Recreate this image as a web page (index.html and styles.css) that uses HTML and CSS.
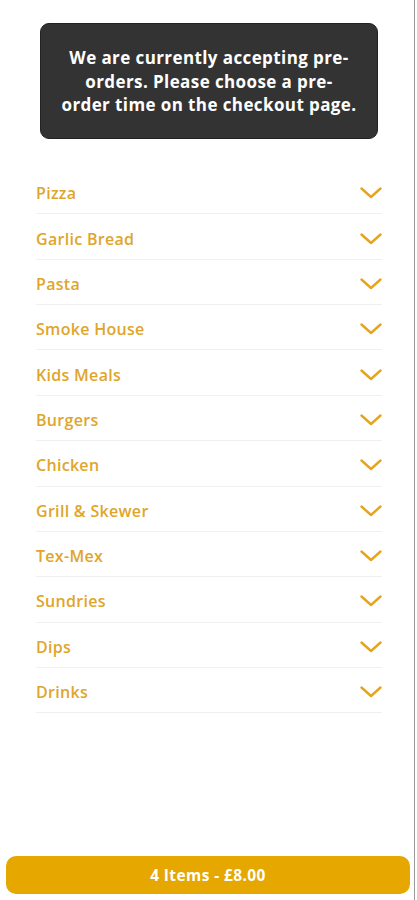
FILE: index.html
```html
<!DOCTYPE html>
<html lang="en">
<head>
<meta charset="utf-8">
<title>Menu</title>
<link rel="stylesheet" href="styles.css">
</head>
<body>
<div class="page">
  <div class="notice">We are currently accepting pre-<br>orders. Please choose a pre-<br>order time on the checkout page.</div>
  <ul class="menu">
    <li class="row"><span>Pizza</span><svg class="chev" viewBox="0 0 22 12"><path d="M1.5 1.5 L11 10 L20.5 1.5"/></svg></li>
    <li class="row"><span>Garlic Bread</span><svg class="chev" viewBox="0 0 22 12"><path d="M1.5 1.5 L11 10 L20.5 1.5"/></svg></li>
    <li class="row"><span>Pasta</span><svg class="chev" viewBox="0 0 22 12"><path d="M1.5 1.5 L11 10 L20.5 1.5"/></svg></li>
    <li class="row"><span>Smoke House</span><svg class="chev" viewBox="0 0 22 12"><path d="M1.5 1.5 L11 10 L20.5 1.5"/></svg></li>
    <li class="row"><span>Kids Meals</span><svg class="chev" viewBox="0 0 22 12"><path d="M1.5 1.5 L11 10 L20.5 1.5"/></svg></li>
    <li class="row"><span>Burgers</span><svg class="chev" viewBox="0 0 22 12"><path d="M1.5 1.5 L11 10 L20.5 1.5"/></svg></li>
    <li class="row"><span>Chicken</span><svg class="chev" viewBox="0 0 22 12"><path d="M1.5 1.5 L11 10 L20.5 1.5"/></svg></li>
    <li class="row"><span>Grill &amp; Skewer</span><svg class="chev" viewBox="0 0 22 12"><path d="M1.5 1.5 L11 10 L20.5 1.5"/></svg></li>
    <li class="row"><span>Tex-Mex</span><svg class="chev" viewBox="0 0 22 12"><path d="M1.5 1.5 L11 10 L20.5 1.5"/></svg></li>
    <li class="row"><span>Sundries</span><svg class="chev" viewBox="0 0 22 12"><path d="M1.5 1.5 L11 10 L20.5 1.5"/></svg></li>
    <li class="row"><span>Dips</span><svg class="chev" viewBox="0 0 22 12"><path d="M1.5 1.5 L11 10 L20.5 1.5"/></svg></li>
    <li class="row"><span>Drinks</span><svg class="chev" viewBox="0 0 22 12"><path d="M1.5 1.5 L11 10 L20.5 1.5"/></svg></li>
  </ul>
  <div class="spacer"></div>
  <button class="basket">4 Items - £8.00</button>
</div>
</body>
</html>
```
FILE: styles.css
```css
html, body {
  margin: 0;
  padding: 0;
  background: #ffffff;
}
body {
  font-family: "Open Sans", "Liberation Sans", sans-serif;
}
.page {
  width: 415px;
  height: 900px;
  box-sizing: border-box;
  border-right: 1px solid #9a9a9a;
  display: flex;
  flex-direction: column;
  padding: 23px 0 6px 0;
}
.notice {
  margin: 0 36px 0 40px;
  height: 116px;
  box-sizing: border-box;
  background: #333333;
  border: 1px solid #222;
  border-radius: 9px;
  color: #ffffff;
  font-weight: 700;
  font-size: 17px;
  line-height: 23.5px;
  letter-spacing: 0.4px;
  text-align: center;
  white-space: nowrap;
  padding: 22px 0 0 0;
}
.menu {
  list-style: none;
  margin: 30px 32px 0 36px;
  padding: 0;
}
.row {
  height: 45.36px;
  box-sizing: border-box;
  border-bottom: 1px solid #f0f0f0;
  display: flex;
  align-items: center;
  justify-content: space-between;
  padding-top: 4px;
  color: #e0a52a;
  font-size: 16px;
  font-weight: 600;
  letter-spacing: 0.3px;
}
.chev {
  width: 22px;
  height: 12px;
  margin-top: 0;
  fill: none;
  stroke: #e5a51e;
  stroke-width: 2.4;
  stroke-linecap: round;
  stroke-linejoin: round;
}
.spacer {
  flex: 1;
}
.basket {
  margin: 0 4px 0 6px;
  height: 38px;
  border: none;
  border-radius: 10px;
  background: #e5a700;
  color: #ffffff;
  font-family: "Open Sans", "Liberation Sans", sans-serif;
  font-weight: 700;
  font-size: 15.5px;
  letter-spacing: 0.4px;
}
```
